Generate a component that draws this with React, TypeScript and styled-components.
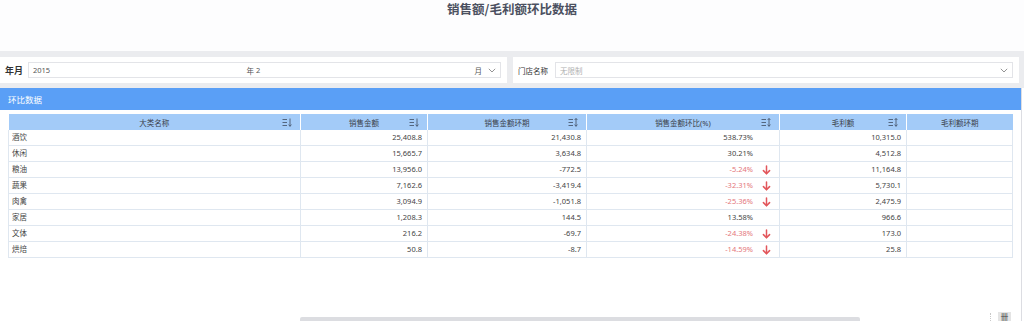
import React from "react";
import styled, { createGlobalStyle } from "styled-components";

const GlobalStyle = createGlobalStyle`
  html, body {
    margin: 0;
    padding: 0;
    background: #ffffff;
    font-family: "Noto Sans", "Noto Sans CJK SC", sans-serif;
    color: #333;
  }
`;

interface IRow {
    name: string;
    sales: string;
    prev: string;
    ratio: string;
    down: boolean;
    profit: string;
}

const rows: IRow[] = [
    { name: "酒饮", sales: "25,408.8", prev: "21,430.8", ratio: "538.73%", down: false, profit: "10,315.0" },
    { name: "休闲", sales: "15,665.7", prev: "3,634.8", ratio: "30.21%", down: false, profit: "4,512.8" },
    { name: "粮油", sales: "13,956.0", prev: "-772.5", ratio: "-5.24%", down: true, profit: "11,164.8" },
    { name: "蔬果", sales: "7,162.6", prev: "-3,419.4", ratio: "-32.31%", down: true, profit: "5,730.1" },
    { name: "肉禽", sales: "3,094.9", prev: "-1,051.8", ratio: "-25.36%", down: true, profit: "2,475.9" },
    { name: "家居", sales: "1,208.3", prev: "144.5", ratio: "13.58%", down: false, profit: "966.6" },
    { name: "文体", sales: "216.2", prev: "-69.7", ratio: "-24.38%", down: true, profit: "173.0" },
    { name: "烘焙", sales: "50.8", prev: "-8.7", ratio: "-14.59%", down: true, profit: "25.8" },
];

const SortIcon = ({ both }: { both?: boolean }) => (
    <SortSvg width="10" height="9" viewBox="0 0 10 9">
        <g stroke="#4a5a70" strokeWidth="0.9" fill="none">
            <line x1="0.5" y1="1.5" x2="5" y2="1.5" />
            <line x1="0.5" y1="4.5" x2="5" y2="4.5" />
            <line x1="0.5" y1="7.5" x2="5" y2="7.5" />
            <line x1="8" y1="0.5" x2="8" y2="8.3" />
            <polyline points="6.6,6.6 8,8.3 9.4,6.6" />
            {both && <polyline points="6.6,2 8,0.5 9.4,2" />}
        </g>
    </SortSvg>
);

const DownArrow = () => (
    <ArrowSvg width="9" height="10" viewBox="0 0 9 10">
        <g stroke="#e2565b" strokeWidth="1.5" fill="none" strokeLinecap="round">
            <line x1="4.5" y1="1" x2="4.5" y2="8.5" />
            <polyline points="1.4,5.6 4.5,8.6 7.6,5.6" />
        </g>
    </ArrowSvg>
);

const Chevron = () => (
    <ChevronSvg width="8" height="5" viewBox="0 0 8 5">
        <polyline points="0.8,0.8 4,4 7.2,0.8" stroke="#888" strokeWidth="0.9" fill="none" />
    </ChevronSvg>
);

const App = () => {
    return (
        <Page>
            <GlobalStyle />
            <TitleBar>
                <Title>销售额/毛利额环比数据</Title>
            </TitleBar>

            <FilterArea>
                <FilterPanel $grow={507}>
                    <FilterLabel>年月</FilterLabel>
                    <SelectBox>
                        <DatePart $width={221}>
                            <span>2015</span>
                            <span>年</span>
                        </DatePart>
                        <DatePart $width={0}>
                            <span>&nbsp;2</span>
                            <span>月</span>
                        </DatePart>
                        <Chevron />
                    </SelectBox>
                </FilterPanel>
                <FilterPanel $grow={506}>
                    <StoreLabel>门店名称</StoreLabel>
                    <SelectBox>
                        <Placeholder>无限制</Placeholder>
                        <Chevron />
                    </SelectBox>
                </FilterPanel>
            </FilterArea>

            <Section>
                <SectionHeader>环比数据</SectionHeader>
                <Content>
                    <Table>
                        <colgroup>
                            <col style={{ width: 292 }} />
                            <col style={{ width: 127 }} />
                            <col style={{ width: 159 }} />
                            <col style={{ width: 193 }} />
                            <col style={{ width: 127 }} />
                            <col style={{ width: 106 }} />
                        </colgroup>
                        <thead>
                            <tr>
                                <Th>
                                    大类名称
                                    <SortIcon />
                                </Th>
                                <Th>
                                    销售金额
                                    <SortIcon />
                                </Th>
                                <Th>
                                    销售金额环期
                                    <SortIcon both />
                                </Th>
                                <Th>
                                    销售金额环比(%)
                                    <SortIcon both />
                                </Th>
                                <Th>
                                    毛利额
                                    <SortIcon both />
                                </Th>
                                <Th $last>毛利额环期</Th>
                            </tr>
                        </thead>
                        <tbody>
                            {rows.map((r) => (
                                <tr key={r.name}>
                                    <Td $align="left">{r.name}</Td>
                                    <Td>{r.sales}</Td>
                                    <Td>{r.prev}</Td>
                                    <Td $arrowSpace $red={r.down}>
                                        {r.ratio}
                                        {r.down && <DownArrow />}
                                    </Td>
                                    <Td>{r.profit}</Td>
                                    <Td />
                                </tr>
                            ))}
                        </tbody>
                    </Table>
                </Content>
                <ScrollRow>
                    <ScrollThumb />
                    <CornerDots />
                    <CornerIcon>卌</CornerIcon>
                </ScrollRow>
            </Section>
        </Page>
    );
};

export default App;

const Page = styled.div`
    width: 1024px;
    height: 321px;
    overflow: hidden;
    display: flex;
    flex-direction: column;
`;

const TitleBar = styled.div`
    height: 51px;
    display: flex;
    justify-content: center;
    background: #fdfdfe;
`;

const Title = styled.h1`
    margin: 0;
    font-size: 12.5px;
    line-height: 17px;
    font-weight: 700;
    color: #4b5060;
    font-family: "Noto Sans CJK SC", sans-serif;
`;

const FilterArea = styled.div`
    height: 37px;
    box-sizing: border-box;
    padding: 6px 5px 5px 0;
    background: #ebecef;
    display: flex;
    gap: 6px;
`;

const FilterPanel = styled.div<{ $grow: number }>`
    flex: ${(p) => p.$grow} 1 0;
    background: #ffffff;
    display: flex;
    align-items: center;
    padding: 0 6px 0 5px;
`;

const FilterLabel = styled.span`
    font-size: 9px;
    font-weight: 700;
    color: #333;
    width: 23px;
    font-family: "Noto Sans CJK SC", sans-serif;
`;

const StoreLabel = styled.span`
    font-size: 7.5px;
    color: #333;
    width: 37px;
    font-family: "Noto Sans CJK SC", sans-serif;
`;

const SelectBox = styled.div`
    flex: 1;
    height: 16px;
    box-sizing: border-box;
    border: 1px solid #e3e4e8;
    display: flex;
    align-items: center;
    padding: 0 4px;
    font-size: 7.5px;
    color: #555;
`;

const DatePart = styled.div<{ $width: number }>`
    display: flex;
    justify-content: space-between;
    ${(p) => (p.$width ? `width: ${p.$width}px;` : "flex: 1;")}
    padding-right: ${(p) => (p.$width ? "0" : "6px")};
`;

const Placeholder = styled.span`
    flex: 1;
    color: #b0b0b0;
`;

const ChevronSvg = styled.svg`
    display: block;
    flex-shrink: 0;
`;

const Section = styled.div`
    flex: 1;
    display: flex;
    flex-direction: column;
    border-right: 1px solid #dcdde2;
    margin-right: 2px;
`;

const SectionHeader = styled.div`
    height: 22px;
    background: #5a9ff6;
    color: #ffffff;
    font-size: 8.5px;
    line-height: 22px;
    padding-left: 8px;
    font-family: "Noto Sans CJK SC", sans-serif;
`;

const Content = styled.div`
    flex: 1;
    padding: 4px 0 0 8px;
`;

const Table = styled.table`
    border-collapse: collapse;
    table-layout: fixed;
    width: 1004px;
    font-size: 7.5px;
    color: #333;
`;

const Th = styled.th<{ $last?: boolean }>`
    position: relative;
    height: 16px;
    padding: 0;
    background: #a3cbf8;
    font-weight: 400;
    text-align: center;
    border-right: ${(p) => (p.$last ? "none" : "1px solid #ffffff")};
    color: #3a3f4a;
`;

const SortSvg = styled.svg`
    position: absolute;
    right: 8px;
    top: 4px;
`;

const Td = styled.td<{ $align?: string; $arrowSpace?: boolean; $red?: boolean }>`
    position: relative;
    height: 15px;
    line-height: 15px;
    padding: 0 ${(p) => (p.$arrowSpace ? "26px" : "5px")} 0 ${(p) => (p.$align === "left" ? "3px" : "5px")};
    text-align: ${(p) => p.$align || "right"};
    border: 1px solid #dfe7f0;
    border-top: none;
    color: ${(p) => (p.$red ? "#e4777c" : "#444")};
    white-space: nowrap;
`;

const ArrowSvg = styled.svg`
    position: absolute;
    right: 8px;
    top: 3px;
`;

const ScrollRow = styled.div`
    height: 9px;
    display: flex;
    align-items: flex-end;
    padding-left: 300px;
`;

const ScrollThumb = styled.div`
    width: 560px;
    height: 4px;
    background: #dcdde1;
    border-radius: 2px 2px 0 0;
`;

const CornerDots = styled.div`
    margin-left: 130px;
    width: 1px;
    height: 8px;
    border-left: 1px dotted #c8c8c8;
`;

const CornerIcon = styled.div`
    margin-left: 6px;
    width: 13px;
    height: 9px;
    background: #e4e4e4;
    font-size: 8px;
    line-height: 9px;
    text-align: center;
    color: #444;
    font-family: "Noto Sans CJK SC", sans-serif;
`;
